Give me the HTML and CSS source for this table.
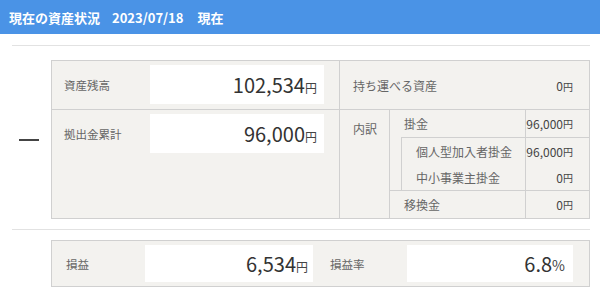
FILE: index.html
```html
<!DOCTYPE html>
<html lang="ja">
<head>
<meta charset="utf-8">
<link rel="stylesheet" href="styles.css">
</head>
<body>
<header class="hdr"><span>現在の資産状況</span><span class="date">2023/07/18</span><span class="now">現在</span></header>
<main class="wrap">
  <section class="summary">
    <div class="toggle"><span class="dash"></span></div>
    <div class="box">
      <div class="left">
        <div class="lrow first"><span class="lbl">資産残高</span><div class="val">102,534<small>円</small></div></div>
        <div class="lrow"><span class="lbl">拠出金累計</span><div class="val">96,000<small>円</small></div></div>
      </div>
      <div class="right">
        <div class="rtop"><span class="rl">持ち運べる資産</span><span class="rv">0<small>円</small></span></div>
        <div class="breakdown">
          <div class="bd-label">内訳</div>
          <div class="bd-body">
            <div class="bd-row"><span class="n">掛金</span><span class="v">96,000<small>円</small></span></div>
            <div class="bd-inner">
              <div class="bd-row sub"><span class="n">個人型加入者掛金</span><span class="v">96,000<small>円</small></span></div>
              <div class="bd-row sub"><span class="n">中小事業主掛金</span><span class="v">0<small>円</small></span></div>
            </div>
            <div class="bd-row last"><span class="n">移換金</span><span class="v">0<small>円</small></span></div>
          </div>
        </div>
      </div>
    </div>
  </section>
  <section class="pl">
    <div class="plbox">
      <span class="lbl">損益</span><div class="val v1">6,534<small>円</small></div>
      <span class="lbl l2">損益率</span><div class="val v2">6.8<small>%</small></div>
    </div>
  </section>
</main>
</body>
</html>
```
FILE: styles.css
```css
body {
  margin: 0;
  font-family: "Noto Sans CJK JP", "Noto Sans", sans-serif;
  color: #333;
  background: #fff;
}
.hdr {
  height: 34px;
  background: #4a93e6;
  color: #fff;
  font-weight: bold;
  font-size: 13px;
  display: flex;
  align-items: center;
  padding-left: 9px;
}
.hdr .date { margin-left: 12px; }
.hdr .now { margin-left: 14px; }

.wrap { padding: 11px 10px 0 12px; }

.summary {
  border-top: 1px solid #e2e2e2;
  padding: 14px 0 10px;
  display: flex;
  align-items: center;
}
.toggle { width: 39px; flex: none; padding-left: 7px; box-sizing: border-box; }
.dash { display: block; width: 20px; height: 2px; background: #444; }

.box {
  flex: 1;
  display: grid;
  grid-template-columns: 287px 1fr;
  border: 1px solid #d0d0d0;
  background: #f3f2ef;
}
.lrow {
  display: grid;
  grid-template-columns: 98px 174px;
  padding: 4px 0 5px;
  align-items: center;
}
.lrow.first { border-bottom: 1px solid #d0d0d0; }
.lbl { padding-left: 12px; font-size: 11.5px; color: #666; }
.val {
  height: 39px;
  background: #fff;
  display: flex;
  align-items: center;
  justify-content: flex-end;
  padding-right: 7px;
  font-size: 20px;
  color: #333;
}
.val small { font-size: 12px; margin-top: 5px; color: #444; }

.right { border-left: 1px solid #d0d0d0; }
.rtop {
  height: 48px;
  border-bottom: 1px solid #d0d0d0;
  display: flex;
  justify-content: space-between;
  align-items: center;
  padding: 0 16px 0 13px;
  font-size: 12px;
  color: #666;
}
.rv, .v { font-size: 12px; color: #444; }
.rv small, .v small { font-size: 10px; }

.breakdown { display: grid; grid-template-columns: 49px 1fr; }
.bd-label { padding: 10px 0 0 13px; font-size: 12px; color: #666; }
.bd-body { border-left: 1px solid #d0d0d0; }
.bd-row {
  display: grid;
  grid-template-columns: 1fr 64px;
  height: 27px;
  align-items: center;
  font-size: 12px;
  color: #666;
}
.bd-row.sub { height: 26px; }
.bd-row.last { border-top: 1px solid #d0d0d0; }
.bd-row .n { padding-left: 14px; }
.bd-row .v {
  height: 100%;
  border-left: 1px solid #d0d0d0;
  display: flex;
  align-items: center;
  justify-content: flex-end;
  padding-right: 16px;
}
.bd-inner {
  margin-left: 11px;
  border-left: 1px solid #d0d0d0;
  border-top: 1px solid #d0d0d0;
}

.pl {
  border-top: 1px solid #e2e2e2;
  padding: 10px 0 0 39px;
}
.plbox {
  display: grid;
  grid-template-columns: 93px 168px 94px 166px;
  padding: 4px 16px 4px 0;
  border: 1px solid #d0d0d0;
  background: #f3f2ef;
  align-items: center;
}
.plbox .lbl { padding-left: 14px; }
.plbox .l2 { padding-left: 17px; }
.plbox .val { height: 37px; }
.plbox .v1 { padding-right: 5px; }
.plbox .v2 { padding-right: 8px; }
.plbox .v2 small { font-size: 14px; margin-top: 3px; }
```
